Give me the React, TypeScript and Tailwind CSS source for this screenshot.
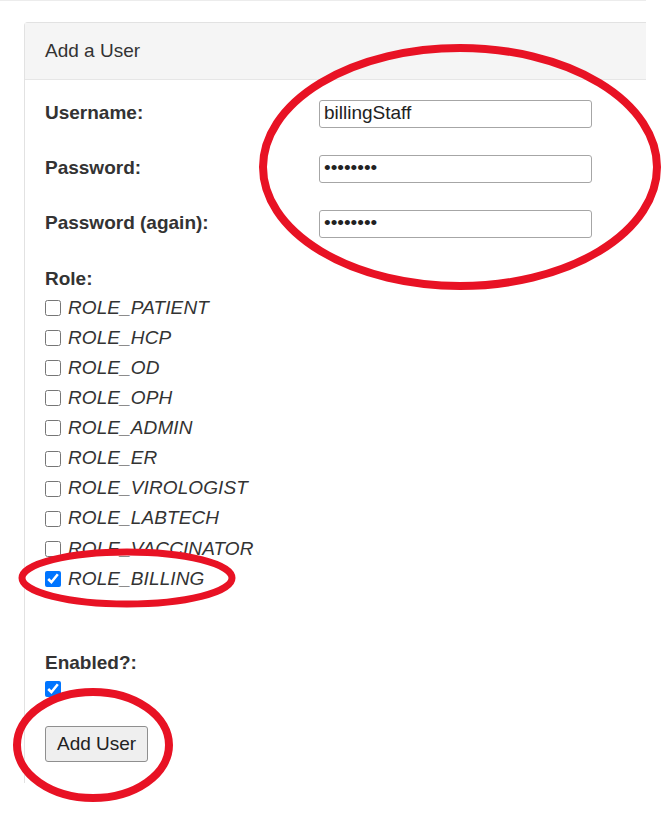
import { useState } from "react";

const roles = [
    'ROLE_PATIENT',
    'ROLE_HCP',
    'ROLE_OD',
    'ROLE_OPH',
    'ROLE_ADMIN',
    'ROLE_ER',
    'ROLE_VIROLOGIST',
    'ROLE_LABTECH',
    'ROLE_VACCINATOR',
    'ROLE_BILLING',
]

function App() {

    const [username, setUsername] = useState('billingStaff')
    const [password, setPassword] = useState('password')
    const [passwordAgain, setPasswordAgain] = useState('password')
    const [selected, setSelected] = useState<string[]>(['ROLE_BILLING'])
    const [enabled, setEnabled] = useState(true)

    const toggleRole = (role: string) => {
        setSelected(prev => prev.includes(role) ? prev.filter(r => r !== role) : [...prev, role])
    }

    const fields = [
        { label: 'Username:', type: 'text', value: username, onChange: setUsername },
        { label: 'Password:', type: 'password', value: password, onChange: setPassword },
        { label: 'Password (again):', type: 'password', value: passwordAgain, onChange: setPasswordAgain },
    ]

    return (
        <div className="relative w-[672px] h-[820px] bg-white text-[19px] text-[#333] font-['Liberation_Sans',Arial,sans-serif] overflow-hidden">
            <div className="w-[646px] border-t border-[#ececec] pt-[21px]">
                <div className="ml-[24px] border-l border-t border-[#e2e2e2] rounded-tl-[4px] h-[761px]">
                    <div className="h-[57px] bg-[#f5f5f5] border-b border-[#e6e6e6] px-[20px] flex items-center">
                        Add a User
                    </div>
                    <form className="px-[20px] pt-[6px]" onSubmit={e => e.preventDefault()}>
                        {fields.map(f => (
                            <div key={f.label} className="h-[55px] flex items-center">
                                <label className="w-[274px] font-bold">{f.label}</label>
                                <input
                                    type={f.type}
                                    value={f.value}
                                    onChange={e => f.onChange(e.target.value)}
                                    className="w-[273px] h-[28px] border border-[#a6a6a6] rounded-[3px] px-[4px] text-[19px] text-[#222] outline-none"
                                />
                            </div>
                        ))}
                        <div className="mt-[14px] h-[28px] leading-[28px] font-bold">Role:</div>
                        {roles.map(role => (
                            <label key={role} className="h-[30.1px] flex items-center">
                                <input
                                    type="checkbox"
                                    checked={selected.includes(role)}
                                    onChange={() => toggleRole(role)}
                                    className="w-[16px] h-[16px] m-0 mr-[7px] accent-[#0075ff]"
                                />
                                <span className="italic tracking-[0.1px]">{role}</span>
                            </label>
                        ))}
                        <div className="mt-[55px] h-[28px] leading-[28px] font-bold">Enabled?:</div>
                        <div className="h-[24px] flex items-center">
                            <input
                                type="checkbox"
                                checked={enabled}
                                onChange={() => setEnabled(!enabled)}
                                className="w-[16px] h-[16px] m-0 accent-[#0075ff]"
                            />
                        </div>
                        <button
                            type="submit"
                            className="mt-[25px] h-[36px] px-[11px] bg-[#efefef] border border-[#8f8f8f] rounded-[3px] text-[19px] text-[#222]"
                        >
                            Add User
                        </button>
                    </form>
                </div>
            </div>

            {/* red annotation marks drawn over the form */}
            <svg className="absolute inset-0 pointer-events-none" width="672" height="820" viewBox="0 0 672 820">
                <ellipse cx="460" cy="167" rx="197" ry="119" fill="none" stroke="#e81224" strokeWidth="8" />
                <ellipse cx="127" cy="578" rx="105" ry="26" fill="none" stroke="#e81224" strokeWidth="7" />
                <ellipse cx="93" cy="745" rx="76" ry="53" fill="none" stroke="#e81224" strokeWidth="8" />
            </svg>
        </div>
    )
}

export default App;
